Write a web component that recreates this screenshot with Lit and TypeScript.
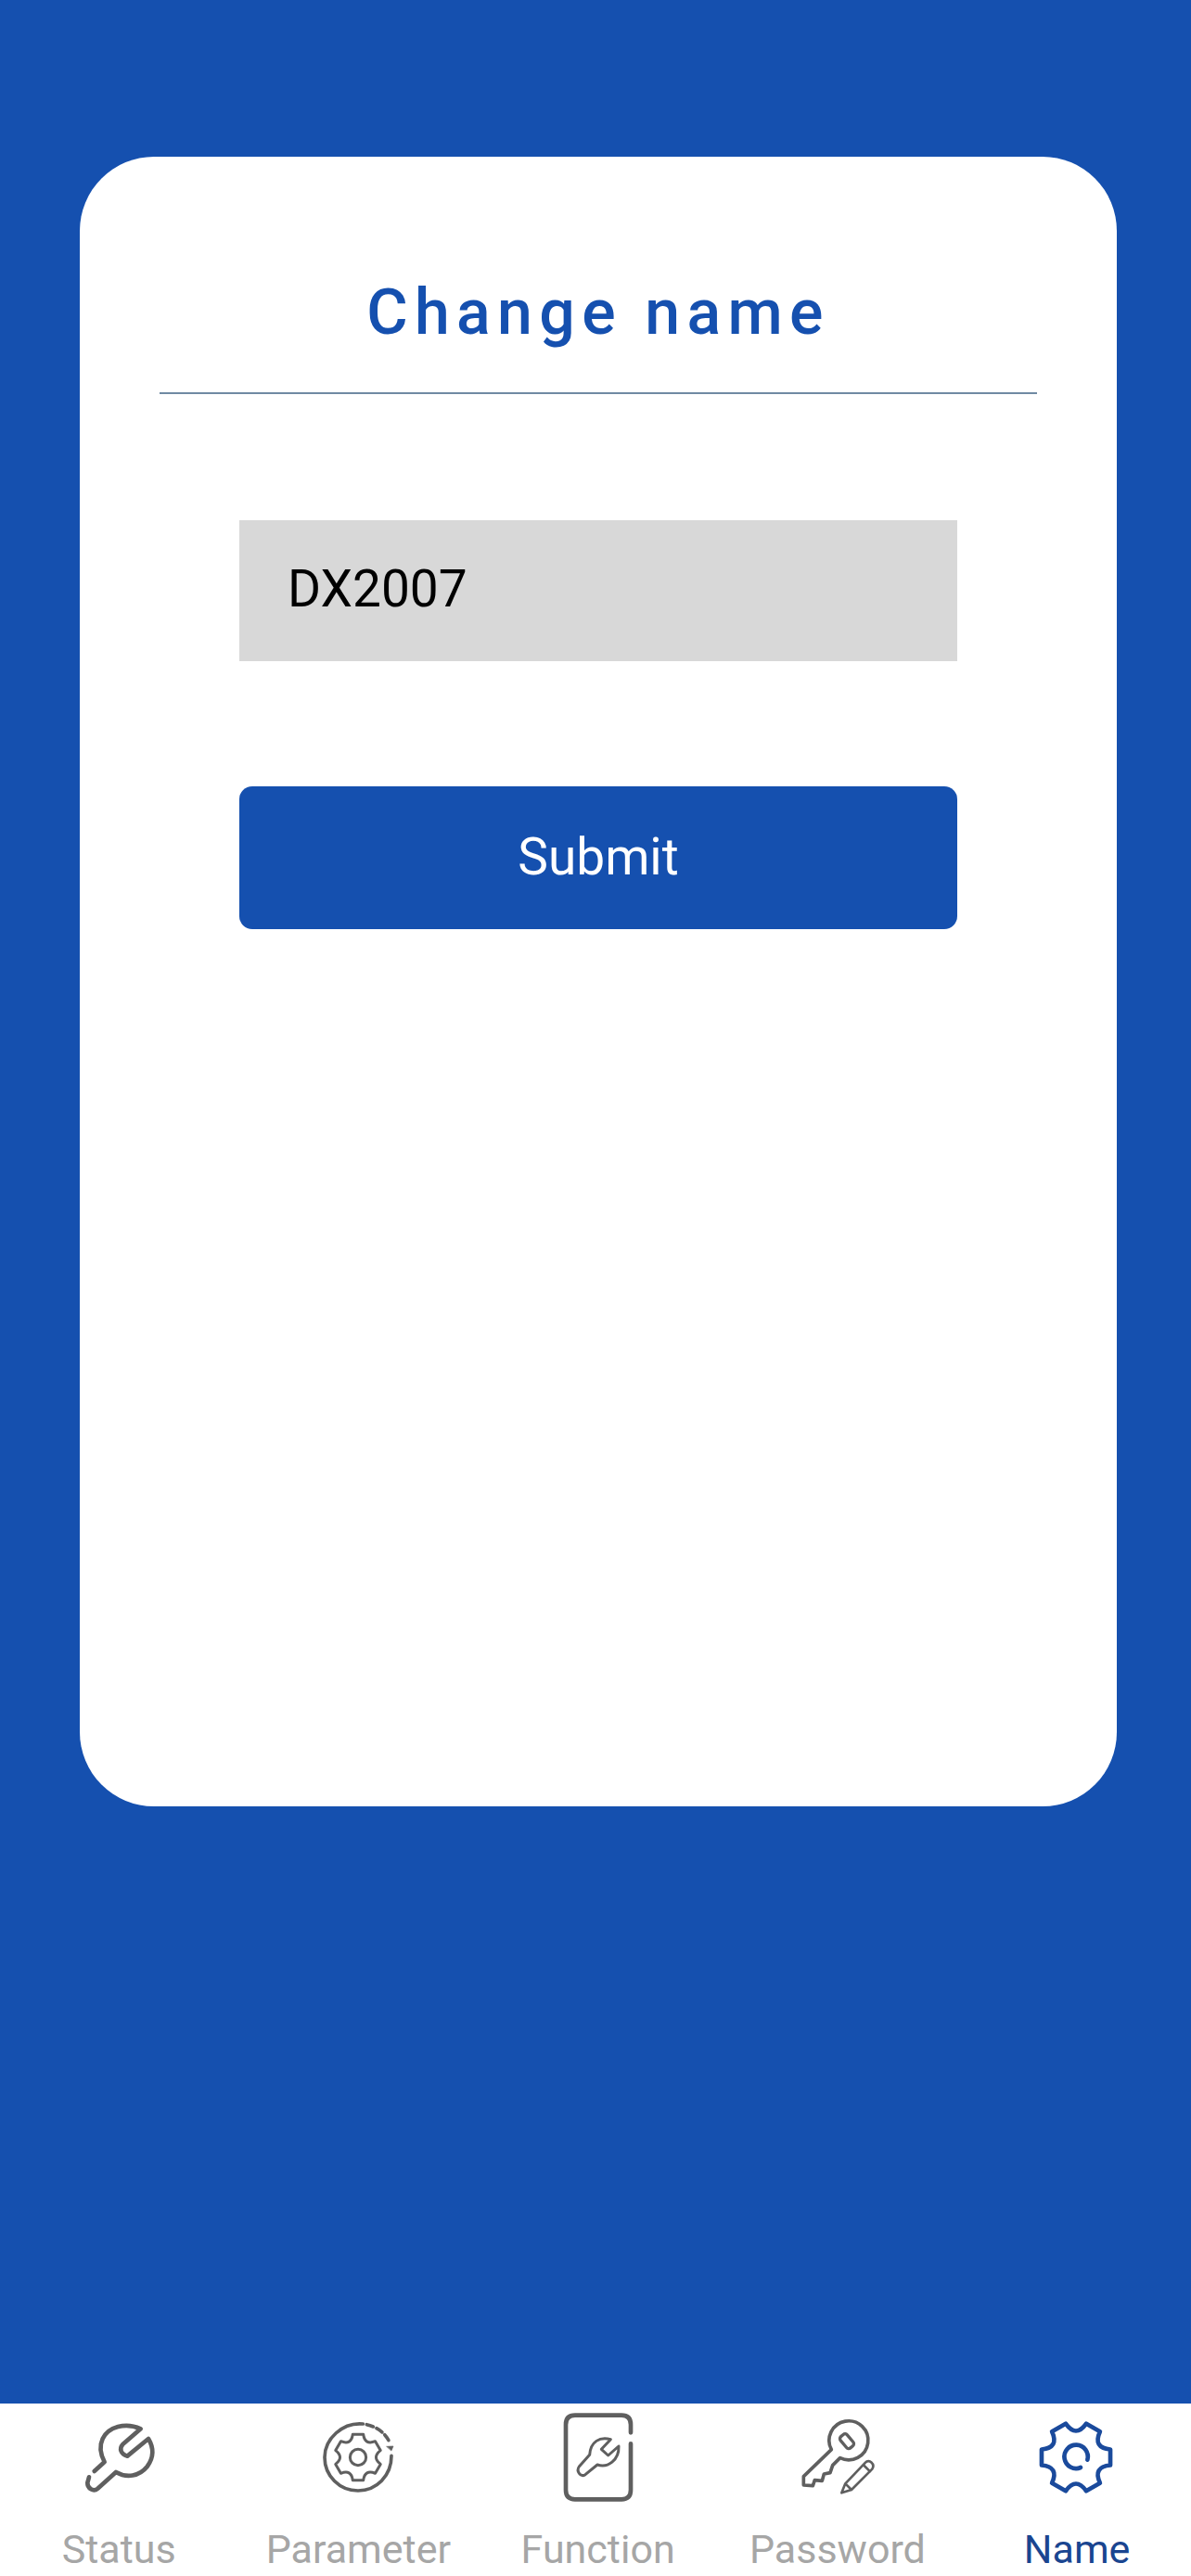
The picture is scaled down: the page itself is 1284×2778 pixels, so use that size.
import {css, html, LitElement, svg} from 'lit';
import {customElement} from 'lit/decorators.js';

// six lobed gear outline, tips joined by curved valleys
function gearPath(r: number, rValley: number, startDeg: number, halfTip: number) {
  const c = 150;
  const pt = (rad: number, deg: number) => {
    const a = (deg * Math.PI) / 180;
    return `${(c + rad * Math.cos(a)).toFixed(1)} ${(c + rad * Math.sin(a)).toFixed(1)}`;
  };
  let d = '';
  for (let i = 0; i < 6; i++) {
    const a = startDeg + i * 60;
    d += `${i === 0 ? 'M' : 'L'}${pt(r, a - halfTip)} L${pt(r, a + halfTip)} `;
    d += `Q${pt(rValley, a + 30)} ${pt(r, a + 60 - halfTip)} `;
  }
  return d + 'Z';
}

const icons = {
  status: svg`<svg viewBox="-6 0 300 300" class="ico">
    <path d="M65 195 L98 165 C85 140 80 115 92 90 C110 52 165 35 215 58 L157 108 C145 122 150 140 172 146 L240 90 C258 120 258 150 236 180 C210 212 170 218 135 198 L76 251 C62 263 42 250 43 232 L48 214"/>
  </svg>`,
  parameter: svg`<svg viewBox="0 0 300 300" class="ico">
    <path d="M166 42 C100 36 42 90 42 150 C42 210 90 258 150 258 C210 258 258 210 258 145" stroke-width="11"/>
    <path d="M178 44 C212 52 240 72 254 106" stroke-dasharray="22 12" stroke-width="11"/>
    <path d="M243 115 L264 114 L258 128 Z" class="fill"/>
    <path d="${gearPath(76, 44, -90, 13)}" stroke-width="9"/>
    <circle cx="150" cy="150" r="26" stroke-width="9"/>
  </svg>`,
  func: svg`<svg viewBox="0 6 300 300" class="ico">
    <path d="M255 76 V50 Q255 20 225 20 H75 Q45 20 45 50 V262 Q45 292 75 292 H225 Q255 292 255 262 V112"/>
    <path d="M190 98 C155 88 125 105 122 148 L88 186 C78 200 92 222 108 212 L147 180 C180 192 218 165 216 120 L182 150 L160 130 Z" stroke-width="9"/>
  </svg>`,
  password: svg`<svg viewBox="0 0 300 300" class="ico">
    <path d="M130 125 L40 212 V240 L70 242 L76 224 L100 226 L106 204 L126 200 L134 176 L158 152 A63 63 0 1 0 130 125 Z" stroke-width="11"/>
    <rect x="166" y="74" width="28" height="48" rx="9" transform="rotate(-40 180 98)" stroke-width="10"/>
    <path d="M163 265 L175 235 L240 167 C252 154 272 172 262 188 L195 255 Z M175 235 L195 255 M233 174 L255 196" stroke-width="8"/>
  </svg>`,
  name: svg`<svg viewBox="3 0 300 300" class="ico blue">
    <path d="${gearPath(114, 62, 0, 13)}"/>
    <path d="M187 158 A38 38 0 1 0 165 183"/>
  </svg>`,
};

const tabs = [
  {label: 'Status', icon: icons.status},
  {label: 'Parameter', icon: icons.parameter},
  {label: 'Function', icon: icons.func},
  {label: 'Password', icon: icons.password},
  {label: 'Name', icon: icons.name, active: true},
];

@customElement('app-root')
export class AppRoot extends LitElement {
  static override styles = css`
    :host {
      display: flex;
      flex-direction: column;
      width: 1284px;
      height: 2778px;
      overflow: hidden;
      background: #1550af;
      font-family: Roboto, 'Liberation Sans', sans-serif;
    }

    .main {
      flex: 1;
      padding: 169px 80px 0 86px;
    }

    .card {
      box-sizing: border-box;
      height: 1779px;
      padding: 0 86px;
      background: #fff;
      border-radius: 80px;
    }

    .title {
      margin: 0;
      padding-top: 126px;
      height: 128px;
      line-height: 84px;
      font-size: 68px;
      font-weight: 500;
      letter-spacing: 7.35px;
      text-align: center;
      color: #1550af;
      border-bottom: 2px solid #6f8aa3;
    }

    .form {
      display: flex;
      flex-direction: column;
      gap: 135px;
      padding: 136px 86px 0;
    }

    .field {
      box-sizing: border-box;
      width: 100%;
      height: 152px;
      padding: 0 0 4px 52px;
      border: 0;
      outline: none;
      background: #d8d8d8;
      color: #000;
      font: 400 55px Roboto, 'Liberation Sans', sans-serif;
    }

    .submit {
      height: 154px;
      padding: 0 0 3px;
      border: 0;
      border-radius: 14px;
      background: #1550af;
      color: #fff;
      font: 400 55px Roboto, 'Liberation Sans', sans-serif;
    }

    .nav {
      display: grid;
      grid-template-columns: repeat(5, 258.25px);
      height: 186px;
      margin-left: -1px;
      background: #fff;
    }

    .tab {
      display: flex;
      flex-direction: column;
      align-items: center;
      padding-top: 8px;
      color: #a6a6a6;
      font-size: 43px;
      line-height: 50px;
      white-space: nowrap;
    }

    .tab.active {
      color: #1a4590;
    }

    .tab span {
      margin-top: 24px;
    }

    .ico {
      display: block;
      width: 100px;
      height: 100px;
      fill: none;
      stroke: #5f5f5f;
      stroke-width: 14;
      stroke-linecap: round;
      stroke-linejoin: round;
    }

    .ico.blue {
      stroke: #1a4a9c;
    }

    .ico .fill {
      fill: #5f5f5f;
      stroke-width: 2;
    }
  `;

  override render() {
    return html`
      <div class="main">
        <div class="card">
          <h1 class="title">Change name</h1>
          <div class="form">
            <input class="field" .value=${'DX2007'} />
            <button class="submit">Submit</button>
          </div>
        </div>
      </div>
      <nav class="nav">
        ${tabs.map(
          (t) => html`<div class="tab ${t.active ? 'active' : ''}">
            ${t.icon}
            <span>${t.label}</span>
          </div>`
        )}
      </nav>
    `;
  }
}

declare global {
  interface HTMLElementTagNameMap {
    'app-root': AppRoot;
  }
}
